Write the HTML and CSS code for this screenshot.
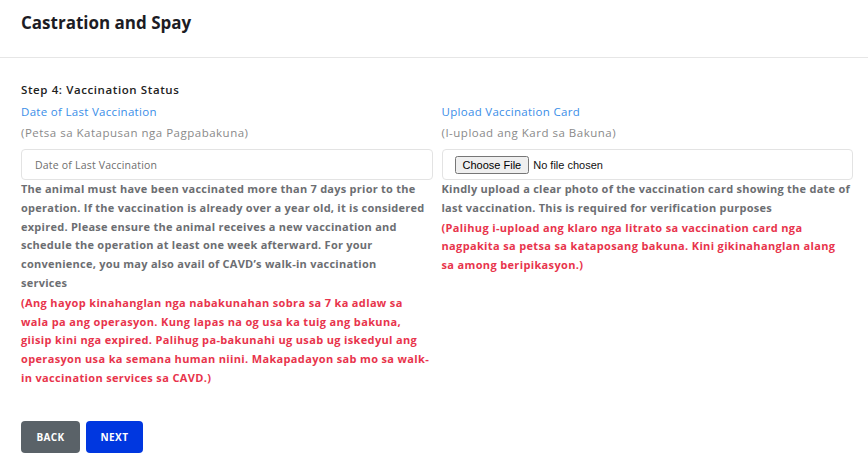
FILE: index.html
```html
<!DOCTYPE html>
<html lang="en">
<head>
<meta charset="utf-8">
<title>Castration and Spay</title>
<link rel="stylesheet" href="styles.css">
</head>
<body>
<header class="page-header">
  <h1 class="page-title">Castration and Spay</h1>
</header>
<main class="content">
  <h2 class="step-title">Step 4: Vaccination Status</h2>
  <div class="columns">
    <div class="field">
      <label class="field-label" for="lastvac">Date of Last Vaccination</label>
      <div class="field-sub">(Petsa sa Katapusan nga Pagpabakuna)</div>
      <input class="text-input" id="lastvac" type="text" placeholder="Date of Last Vaccination">
      <p class="note">The animal must have been vaccinated more than 7 days prior to the<br>operation. If the vaccination is already over a year old, it is considered<br>expired. Please ensure the animal receives a new vaccination and<br>schedule the operation at least one week afterward. For your<br>convenience, you may also avail of CAVD’s walk-in vaccination<br>services</p>
      <p class="note note-red">(Ang hayop kinahanglan nga nabakunahan sobra sa 7 ka adlaw sa<br>wala pa ang operasyon. Kung lapas na og usa ka tuig ang bakuna,<br>giisip kini nga expired. Palihug pa-bakunahi ug usab ug iskedyul ang<br>operasyon usa ka semana human niini. Makapadayon sab mo sa walk-<br>in vaccination services sa CAVD.)</p>
    </div>
    <div class="field">
      <label class="field-label" for="card">Upload Vaccination Card</label>
      <div class="field-sub">(I-upload ang Kard sa Bakuna)</div>
      <div class="file-box"><input class="file-input" id="card" type="file"></div>
      <p class="note">Kindly upload a clear photo of the vaccination card showing the date of<br>last vaccination. This is required for verification purposes</p>
      <p class="note note-red">(Palihug i-upload ang klaro nga litrato sa vaccination card nga<br>nagpakita sa petsa sa kataposang bakuna. Kini gikinahanglan alang<br>sa among beripikasyon.)</p>
    </div>
  </div>
  <div class="actions">
    <button class="btn btn-back" type="button">BACK</button>
    <button class="btn btn-next" type="button">NEXT</button>
  </div>
</main>
</body>
</html>
```
FILE: styles.css
```css
* { box-sizing: border-box; }
html, body { margin: 0; padding: 0; background: #fff; }
body {
  font-family: "Open Sans", "DejaVu Sans", sans-serif;
  color: #222;
}
.page-header {
  height: 58px;
  border-bottom: 1px solid #e6e6e6;
  padding: 12px 21px 0;
}
.page-title {
  margin: 0;
  font-size: 17px;
  font-weight: 700;
  color: #1c1c24;
  line-height: 22px;
}
.content {
  padding: 24px 15px 0 21px;
}
.step-title {
  margin: 0 0 6px;
  font-size: 11.5px;
  font-weight: 600;
  letter-spacing: 0.6px;
  color: #222;
  line-height: 16px;
}
.columns {
  display: grid;
  grid-template-columns: 1fr 1fr;
  column-gap: 9px;
}
.field { display: flex; flex-direction: column; }
.field-label {
  font-size: 11.5px;
  letter-spacing: 0.3px;
  color: #3a8ee8;
  line-height: 16px;
  margin-bottom: 5px;
}
.field-sub {
  font-size: 11.5px;
  letter-spacing: 0.5px;
  color: #8a8a8a;
  line-height: 16px;
  margin-bottom: 8px;
}
.text-input, .file-box {
  height: 31px;
  border: 1px solid #e3e3e3;
  border-radius: 4px;
  background: #fff;
  width: 100%;
}
.text-input {
  padding: 0 13px;
  font-family: inherit;
  font-size: 10.5px;
  letter-spacing: 0.2px;
  color: #555;
  outline: none;
}
.text-input::placeholder { color: #6e6e6e; }
.file-box {
  display: flex;
  align-items: center;
  padding: 0 12px;
}
.file-input {
  font-family: "Liberation Sans", Arial, sans-serif;
  font-size: 11px;
  color: #111;
}
.note {
  margin: 0;
  font-size: 11px;
  font-weight: 700;
  letter-spacing: 0.25px;
  line-height: 18.8px;
  color: #6c6e72;
}
.note-red {
  color: #e8344c;
  letter-spacing: 0.35px;
  margin-top: 1px;
}
.actions {
  display: flex;
  gap: 6px;
  margin-top: 33px;
}
.btn {
  height: 32px;
  border: none;
  border-radius: 4px;
  color: #fff;
  font-family: inherit;
  font-size: 10px;
  font-weight: 700;
  letter-spacing: 0.4px;
  padding: 0;
}
.btn-back { background: #5a6268; width: 59px; }
.btn-next { background: #0037e0; width: 57px; }
```
